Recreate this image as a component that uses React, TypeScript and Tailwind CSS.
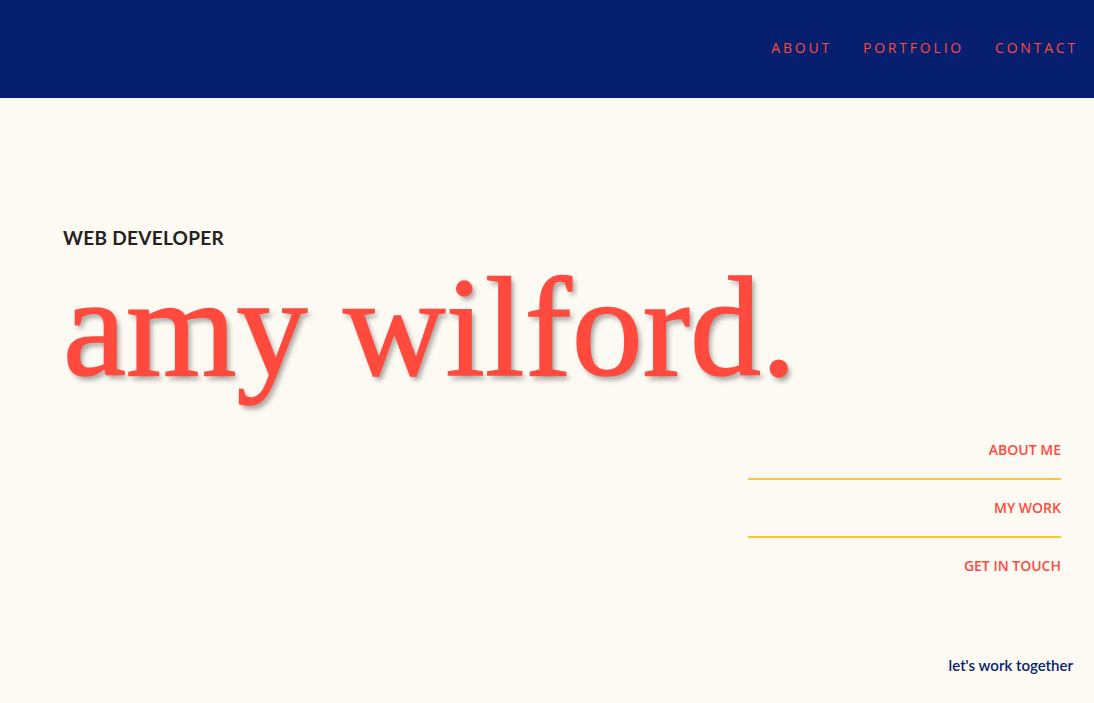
const sans = "font-['Open_Sans',sans-serif]";

const navLinks = ['About', 'Portfolio', 'Contact'];
const sideLinks = ['About me', 'My work', 'Get in touch'];

function Header() {
  return (
    <header className="h-[98px] bg-[#061f6e] flex items-center justify-end pr-[16px]">
      <nav className={`flex gap-[31px] pb-[4px] ${sans}`}>
        {navLinks.map(link => (
          <a key={link} href="#" className="text-[14px] uppercase tracking-[2.8px] text-[#ff4a3d]">
            {link}
          </a>
        ))}
      </nav>
    </header>
  );
}

export default function App() {
  return (
    <div className="min-h-[703px] bg-[#fdf9f3] flex flex-col">
      <Header />

      <main className="flex-1 flex flex-col">
        {/* intro */}
        <section className="pl-[63px] pt-[130px]">
          <p className="font-['Lato',sans-serif] font-bold text-[19px] leading-none tracking-[0.3px] text-[#222]">
            WEB DEVELOPER
          </p>
          <h1 className="font-['Liberation_Serif',serif] text-[142px] leading-none mt-[9px] text-[#ff4a3d] [-webkit-text-stroke:1.5px_#ff4a3d] [text-shadow:3px_4px_5px_rgba(0,0,0,0.35)]">
            amy wilford.
          </h1>
        </section>

        {/* side menu */}
        <ul className={`self-end mr-[33px] mt-[24px] w-[313px] ${sans}`}>
          {sideLinks.map((link, i) => (
            <li
              key={link}
              className={`text-right ${i < sideLinks.length - 1 ? 'border-b-2 border-[#fcc43a]' : ''}`}
            >
              <a href="#" className="block h-[56px] pt-[17px] text-[14px] font-semibold uppercase text-[#ff4a3d]">
                {link}
              </a>
            </li>
          ))}
        </ul>

        <p className="mt-auto self-end pr-[21px] pb-[27px] font-['Lato',sans-serif] font-semibold text-[15px] text-[#061f6e]">
          let's work together
        </p>
      </main>
    </div>
  );
}
